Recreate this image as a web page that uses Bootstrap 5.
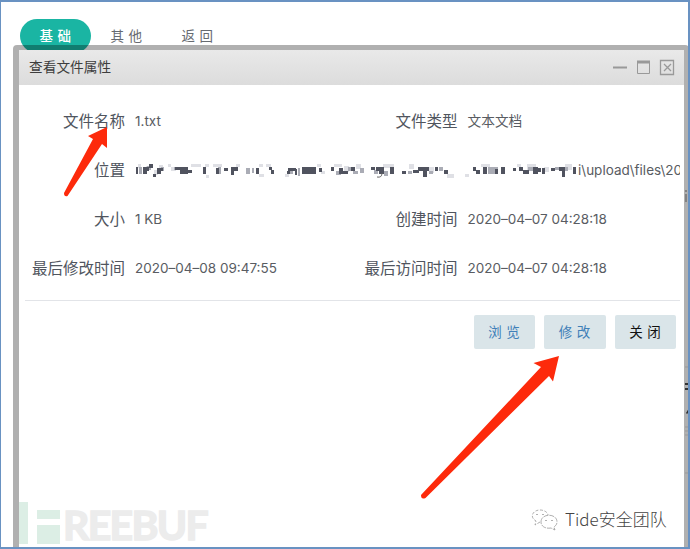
<!DOCTYPE html>
<html lang="zh-CN">
<head>
<meta charset="utf-8">
<meta name="viewport" content="width=device-width, initial-scale=1">
<title>查看文件属性</title>
<link href="https://cdn.jsdelivr.net/npm/bootstrap@5.3.0/dist/css/bootstrap.min.css" rel="stylesheet">
<style>
body{font-family:"Inter","Noto Sans CJK SC",sans-serif;color:#50555e;background:#fff}
.screen{width:690px;height:549px}
.screen-edge{inset:0;border:2px solid #6992c2;border-left-width:1.5px;z-index:5;pointer-events:none}
.tabs-row{padding:19px 0 0 20px}
.tabs-row .nav-link{height:34px;width:71px;padding:0 0 0 4px;font-size:13.5px;letter-spacing:4.5px;color:#666a70;line-height:35px;text-align:center}
.tabs-row .nav-link.active{background:#1ab5a3;color:#fff;font-weight:500;border-radius:17px}
.window{left:13px;top:45px;width:676px;height:520px;border:6px solid rgba(0,0,0,.31);border-top-width:5px;border-right-width:5px;border-radius:4px 4px 0 0}
.window-pane{height:509px;background:#fff}
.window-head{height:35px;padding:0 8px 0 10px;background:linear-gradient(#e9e9e9,#dcdcdc);color:#3d3d3d;font-size:13.7px}
.props{padding-top:12px;height:216px;border-bottom:1px solid #e2e4e8;margin-right:4px;margin-left:6px}
.prop-row{height:49px}
.prop-name{width:100px;font-size:15.5px;text-align:right;white-space:nowrap;flex-shrink:0}
.prop-val{font-size:13.5px;color:#595c62;white-space:nowrap;padding-left:10px}
.prop-val.cjk-val{font-size:13.7px}
.prop-col{width:332.5px;flex-shrink:0}
.path-clip{width:555px;overflow:hidden}
.actions{padding:14px 8px 0 0;gap:9px}
.actions .btn{width:61.5px;height:34px;padding:0 0 0 4px;border:0;border-radius:2px;background:#dae5e9;font-size:13.5px;letter-spacing:4.5px;color:#3f80b8}
.actions .btn.btn-close-win{color:#111}
.arrows{inset:0;z-index:4}
.behind{right:1px;top:184px;width:4px;z-index:3}
.brand-mark{left:19px;top:500px;z-index:3}
.brand-word{font:700 41px/42px "Lato",sans-serif;color:#ececec;-webkit-text-stroke:1.5px #ececec;letter-spacing:-1.7px;margin-left:2px;padding-top:4px}
.author-mark{left:530px;top:506px;z-index:3;font-size:17px;line-height:26px;font-weight:300;color:#444;gap:6px}
.author-mark span{font-family:"Noto Sans CJK SC",sans-serif}
</style>
</head>
<body>
<div class="screen position-relative overflow-hidden">
  <ul class="nav nav-pills tabs-row">
    <li><a class="nav-link active" href="#">基础</a></li>
    <li><a class="nav-link" href="#">其他</a></li>
    <li><a class="nav-link" href="#">返回</a></li>
  </ul>

  <section class="window position-absolute">
    <div class="window-pane">
    <header class="window-head d-flex align-items-center justify-content-between">
      <span>查看文件属性</span>
      <svg width="64" height="17" fill="none" stroke="#999">
        <path d="M1 8.500h14" stroke-width="2"/><path d="M25.500 2.500h12v12h-12z"/><path d="M25 3h13" stroke-width="3"/>
        <path d="M48.500 1.500h13v14h-13zM52 5l7 7m0-7l-7 7" stroke-width="1.300"/>
      </svg>
    </header>
    <div class="props">
      <div class="prop-row d-flex align-items-center"><div class="prop-col d-flex align-items-center"><div class="prop-name">文件名称</div><div class="prop-val">1.txt</div></div><div class="prop-col d-flex align-items-center"><div class="prop-name">文件类型</div><div class="prop-val cjk-val">文本文档</div></div></div>
      <div class="prop-row d-flex align-items-center"><div class="prop-name">位置</div><div class="prop-val path-clip d-flex align-items-center">
        <svg class="flex-shrink-0" width="443" height="16" viewBox="134 162 443 16">
          <path fill="#dfe0e5" d="M137 163h3v4h-3zM145 165h3v3h-3zM153 169h4v5h-4zM158 164h4v3h-4zM167 163h3v3h-3zM170 166h5v4h-5zM190 163h10v3h-10zM204 163h4v3h-4zM205 174h3v3h-3zM212 163h9v3h-9zM235 163h4v3h-4zM258 163h4v3h-4zM258 173h5v3h-5zM265 163h5v3h-5zM284 173h4v3h-4zM316 163h4v3h-4zM320 170h4v3h-4zM333 163h8v3h-8zM343 165h5v6h-5zM355 163h5v5h-5zM382 163h11v4h-11zM408 163h5v5h-5zM428 166h5v6h-5zM446 173h7v4h-7zM464 173h4v3h-4zM480 163h9v3h-9zM516 163h4v3h-4zM526 163h9v6h-9zM543 166h5v5h-5zM564 163h7v6h-7z"/>
          <path fill="#aaacb5" d="M138 166h3v7h-3zM146 165h4v4h-4zM160 166h3v4h-3zM173 166h5v3h-5zM217 166h3v7h-3zM245 167h4v6h-4zM251 167h2v5h-2zM289 170h3v3h-3zM297 167h2v8h-2zM335 170h5v4h-5zM347 166h4v4h-4zM352 170h5v3h-5zM359 167h4v5h-4zM373 169h4v4h-4zM383 170h4v5h-4zM407 170h4v3h-4zM428 170h4v3h-4zM438 166h4v4h-4zM487 166h10v7h-10zM527 166h6v4h-6zM554 166h4v3h-4zM564 166h3v4h-3z"/>
          <path fill="#50535f" d="M135 166h2v7h-2zM142 166h6v4h-6zM142 169h4v4h-4zM148 163h4v4h-4zM152 173h3v3h-3zM156 167h6v3h-6zM156 169h4v4h-4zM174 166h13v3h-13zM179 169h8v4h-8zM187 169h4v3h-4zM202 166h3v7h-3zM215 167h3v6h-3zM223 167h4v3h-4zM230 166h7v4h-7zM230 169h3v5h-3zM255 167h3v6h-3zM268 166h3v3h-3zM270 169h3v4h-3zM287 167h8v3h-8zM286 170h3v3h-3zM294 168h2v6h-2zM301 166h14v7h-14zM318 167h3v4h-3zM310 167h5v3h-5zM330 166h3v4h-3zM338 167h4v6h-4zM342 170h5v3h-5zM350 166h4v4h-4zM370 166h4v3h-4zM375 166h8v4h-8zM378 169h5v4h-5zM389 166h4v7h-4zM401 170h4v3h-4zM412 169h6v3h-6zM417 166h11v4h-11zM422 169h4v7h-4zM434 166h3v4h-3zM443 169h4v4h-4zM472 166h3v4h-3zM475 169h4v4h-4zM482 166h4v7h-4zM494 168h3v5h-3zM500 166h4v7h-4zM512 167h3v3h-3zM518 166h4v4h-4zM522 169h6v4h-6zM532 166h5v7h-5zM537 167h3v4h-3zM541 167h3v6h-3zM550 167h4v3h-4zM558 166h6v4h-6zM561 169h3v7h-3zM572 166h3v7h-3z"/>
          <path fill="none" stroke="#666" d="M376 176q5 1 5-4"/>
        </svg><span>i\upload\files\20</span></div></div>
      <div class="prop-row d-flex align-items-center"><div class="prop-col d-flex align-items-center"><div class="prop-name">大小</div><div class="prop-val">1 KB</div></div><div class="prop-col d-flex align-items-center"><div class="prop-name">创建时间</div><div class="prop-val">2020–04–07 04:28:18</div></div></div>
      <div class="prop-row d-flex align-items-center"><div class="prop-col d-flex align-items-center"><div class="prop-name">最后修改时间</div><div class="prop-val">2020–04–08 09:47:55</div></div><div class="prop-col d-flex align-items-center"><div class="prop-name">最后访问时间</div><div class="prop-val">2020–04–07 04:28:18</div></div></div>
    </div>
    <div class="actions d-flex justify-content-end"><button class="btn">浏览</button><button class="btn">修改</button><button class="btn btn-close-win">关闭</button></div>
    </div>
  </section>

  <div class="brand-mark position-absolute d-flex align-items-center">
    <svg width="42" height="43" fill="#dceee5"><path d="M0 0h9v42H0zM18 8h23v9H18zM18 23h23v19H18z"/></svg><span class="brand-word">REEBUF</span>
  </div>
  <div class="author-mark position-absolute d-flex align-items-center">
    <svg width="29" height="26" fill="none" stroke="#999" stroke-width=".8"><path d="M10 16l-5 3 1-4C-1 11 3 4 10 4c5 0 8 3 8 5" stroke-dasharray="3 1.500"/><path d="M11 16c0-9 16-9 16 0 0 3-2 4-3 5l1 3-4-2c-6 1-10-2-10-6z" stroke-dasharray="5 1"/><path d="M7 8v1M13 8v1M16 14v1M22 14v1" stroke-width="1.500"/></svg>
    <span>Tide安全团队</span>
  </div>

  <svg class="behind position-absolute" height="300" viewBox="0 0 4 300"><path fill="none" stroke="#555" d="M0 7h2M1 10v8"/><path stroke="#999" d="M0 183h4M0 289h4M0 243h4M0 247h4M0 251h4"/><path fill="#333" d="M0 199h3v2H0zM0 204h3v2H0zM1 229l3-5v4l-2 2z"/></svg>
  <svg class="arrows position-absolute" width="690" height="549" fill="#fd2a0b">
    <path d="M107 127L88 136 93 139 64 193Q64 197 67.500 196L102 144 107 148z"/>
    <path d="M559 356L533.500 363 541 367 421 495Q421 500 425.500 498L549 376 553 381.500z"/>
  </svg>
  <div class="screen-edge position-absolute"></div>
</div>
<script src="https://cdn.jsdelivr.net/npm/bootstrap@5.3.0/dist/js/bootstrap.bundle.min.js"></script>
</body>
</html>
